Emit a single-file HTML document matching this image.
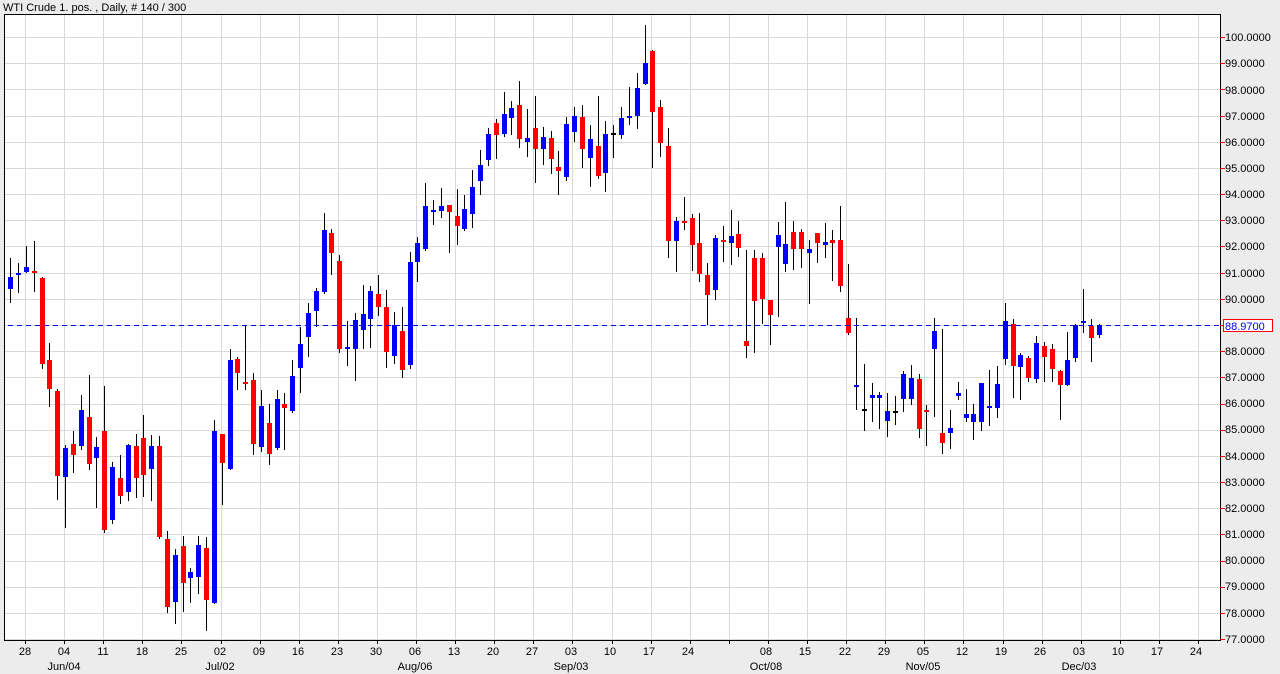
<!DOCTYPE html>
<html><head><meta charset="utf-8"><style>
html,body{margin:0;padding:0;background:#ececec;width:1280px;height:674px;overflow:hidden}
svg{display:block;font-family:"Liberation Sans",sans-serif}
</style></head><body>
<svg id="s" width="1280" height="674" viewBox="0 0 1280 674" xmlns="http://www.w3.org/2000/svg">
<rect x="0" y="0" width="1280" height="674" fill="#ececec"/>
<rect x="5" y="14" width="1215" height="626" fill="#fff"/>
<g id="grid" stroke="#d8d8d8" stroke-width="1"></g>
<g id="candles"></g>
<line x1="8" y1="325.5" x2="1219" y2="325.5" stroke="#0000ff" stroke-width="1" stroke-dasharray="5,4"/>
<path d="M4.5 14 V640.5 H1220.5 V14.5 H4.5" fill="none" stroke="#000" stroke-width="1"/>
<g id="ticks" stroke="#ff0000" stroke-width="1"></g>
<text x="3" y="11" font-size="11" fill="#000">WTI Crude 1. pos. , Daily, # 140 / 300</text>
<g font-size="11" fill="#000">
<text x="1225" y="41">100.0000</text><text x="1225" y="67">99.0000</text><text x="1225" y="94">98.0000</text><text x="1225" y="120">97.0000</text><text x="1225" y="146">96.0000</text><text x="1225" y="172">95.0000</text><text x="1225" y="198">94.0000</text><text x="1225" y="224">93.0000</text><text x="1225" y="250">92.0000</text><text x="1225" y="277">91.0000</text><text x="1225" y="303">90.0000</text><text x="1225" y="355">88.0000</text><text x="1225" y="381">87.0000</text><text x="1225" y="407">86.0000</text><text x="1225" y="433">85.0000</text><text x="1225" y="460">84.0000</text><text x="1225" y="486">83.0000</text><text x="1225" y="512">82.0000</text><text x="1225" y="538">81.0000</text><text x="1225" y="564">80.0000</text><text x="1225" y="590">79.0000</text><text x="1225" y="617">78.0000</text><text x="1225" y="643">77.0000</text>
</g>
<rect x="1223.5" y="319.5" width="49" height="12" fill="#fff" stroke="#ff0000"/>
<text x="1225" y="330" font-size="11" fill="#0000ff">88.9700</text>
<g font-size="11" fill="#000" text-anchor="middle">
<text x="25" y="655">28</text><text x="64" y="655">04</text><text x="103" y="655">11</text><text x="142" y="655">18</text><text x="181" y="655">25</text><text x="220" y="655">02</text><text x="259" y="655">09</text><text x="298" y="655">16</text><text x="337" y="655">23</text><text x="376" y="655">30</text><text x="415" y="655">06</text><text x="454" y="655">13</text><text x="493" y="655">20</text><text x="532" y="655">27</text><text x="571" y="655">03</text><text x="610" y="655">10</text><text x="649" y="655">17</text><text x="688" y="655">24</text><text x="766" y="655">08</text><text x="805" y="655">15</text><text x="845" y="655">22</text><text x="884" y="655">29</text><text x="923" y="655">05</text><text x="962" y="655">12</text><text x="1001" y="655">19</text><text x="1040" y="655">26</text><text x="1079" y="655">03</text><text x="1118" y="655">10</text><text x="1157" y="655">17</text><text x="1196" y="655">24</text>
<text x="64" y="670">Jun/04</text><text x="220" y="670">Jul/02</text><text x="415" y="670">Aug/06</text><text x="571" y="670">Sep/03</text><text x="766" y="670">Oct/08</text><text x="923" y="670">Nov/05</text><text x="1079" y="670">Dec/03</text>
</g>
</svg>
<script>
var NS="http://www.w3.org/2000/svg";
function el(t,a,p){var e=document.createElementNS(NS,t);for(var k in a)e.setAttribute(k,a[k]);p.appendChild(e);return e;}
var g=document.getElementById('grid'),tk=document.getElementById('ticks');
for(var i=0;i<=23;i++){var y=Math.round(37+i*26.18)+0.5;el('line',{x1:5,x2:1220,y1:y,y2:y},g);el('line',{x1:1220,x2:1225,y1:y,y2:y},tk);}
for(var i=0;i<31;i++){var x=Math.round(25+i*39.1)+0.5;el('line',{x1:x,x2:x,y1:14,y2:640},g);el('line',{x1:x,x2:x,y1:640,y2:644,stroke:'#000'},g);}
// color, bodyTop, bodyBottom, high, low
var d=[
['b',277,289,258,303],['b',273,274,263,293],['b',267,272,246,273],['r',271,273,241,292],['r',278,364,277,369],
['r',360,389,343,407],['r',391,476,389,500],['b',448,477,445,528],['r',444,455,431,473],['b',410,446,395,450],
['r',417,464,375,470],['b',447,458,437,508],['r',431,530,386,533],['b',467,520,462,524],['r',478,496,455,504],
['b',445,492,444,501],['r',446,478,434,498],['r',438,475,415,497],['b',446,469,435,501],['r',446,537,436,539],
['r',539,607,531,613],['b',555,602,549,624],['r',546,583,536,612],['b',572,578,568,603],['b',545,577,536,594],
['r',548,600,537,631],['b',431,603,420,604],['r',434,463,434,505],['b',360,469,349,470],['r',359,373,357,390],
['r',382,384,325,390],['r',380,444,373,455],['b',406,447,390,452],['r',423,454,404,465],['b',399,448,390,450],
['r',404,408,393,450],['b',376,411,360,413],['b',344,368,327,393],['b',313,337,303,357],['b',291,311,288,327],
['b',230,292,213,294],['r',233,253,229,275],['r',261,349,255,353],['b',347,349,321,366],['b',320,349,313,381],
['b',314,330,285,349],['b',291,319,286,348],['r',294,307,275,316],['r',307,352,290,368],['b',325,356,312,364],
['r',331,370,307,378],['b',262,365,252,369],['b',243,262,237,282],['b',206,249,183,251],['b',210,212,200,225],
['b',206,211,188,218],['r',205,212,205,253],['r',216,226,189,245],['b',209,229,195,231],['b',187,214,170,228],
['b',165,181,150,195],['b',134,160,128,166],['r',123,135,119,159],['b',114,134,92,137],['b',108,118,101,135],
['r',105,139,81,148],['b',138,142,109,157],['r',128,149,96,183],['b',137,149,127,165],['r',138,159,131,174],
['r',167,171,151,195],['b',124,177,117,181],['b',116,132,107,142],['r',117,149,105,168],['b',139,158,125,187],
['r',146,176,96,179],['b',134,173,121,192],['k',133,134,125,158],['b',118,135,107,139],['b',116,117,87,125],
['b',88,116,73,129],['b',63,84,25,85],['r',51,112,50,168],['r',107,143,100,157],['r',146,241,128,258],
['b',221,241,217,272],['r',221,223,197,230],['r',218,245,214,271],['r',243,274,213,282],['r',275,295,263,325],
['b',238,290,235,300],['r',240,241,226,262],['b',236,243,210,265],['r',234,248,221,257],['r',341,346,250,358],
['r',258,301,250,353],['r',258,299,253,324],['r',300,315,300,345],['b',235,247,222,317],['b',244,264,202,272],
['r',232,249,221,270],['r',232,249,229,268],['b',249,253,240,304],['r',233,243,233,263],['b',242,245,223,258],
['r',240,243,230,281],['r',240,286,206,292],['r',318,333,264,335],['b',385,386,318,410],['k',409,410,364,431],
['b',395,398,383,422],['b',395,398,392,429],['b',411,421,393,437],['k',411,412,396,425],['b',374,399,371,412],
['b',378,399,365,405],['r',379,429,374,438],['r',410,411,405,446],['b',331,349,318,417],['r',433,443,329,454],
['b',428,433,410,449],['b',393,396,382,400],['b',414,418,389,422],['b',414,422,404,440],['b',383,422,383,431],
['b',406,408,370,426],['b',384,408,366,418],['b',321,359,303,365],['r',324,366,319,398],['b',355,367,353,400],
['r',358,378,356,382],['b',343,379,336,383],['r',346,357,342,382],['r',349,369,344,382],['r',371,385,370,420],
['b',360,385,332,386],['b',325,358,324,362],['b',321,323,289,333],['r',326,338,319,362],['b',326,335,324,338]
];
var c=document.getElementById('candles');
var col={b:'#0000ff',r:'#ff0000',k:'#000'};
d.forEach(function(v,i){
 var x=Math.round(10.3+7.83*i);
 el('rect',{x:x,y:v[3],width:1,height:v[4]-v[3],fill:'#000'},c);
 var h=Math.max(2,v[2]-v[1]);
 el('rect',{x:x-2,y:v[1],width:5,height:h,fill:col[v[0]]},c);
});
</script>
</body></html>
